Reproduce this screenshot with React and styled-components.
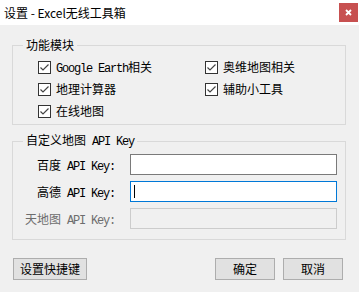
import React from 'react'
import styled, { createGlobalStyle } from 'styled-components'

const GlobalStyle = createGlobalStyle`
  html, body {
    margin: 0;
    padding: 0;
  }
  body {
    background: #f0f0f0;
    font-family: "Noto Sans CJK SC", "Microsoft YaHei", sans-serif;
    font-size: 12px;
    color: #000;
  }
`
const Window = styled.div`
  width: 359px;
  height: 292px;
  background: #f0f0f0;
  display: flex;
  flex-direction: column;
`
const TitleBar = styled.div`
  height: 25px;
  background: #fff;
  display: flex;
  align-items: flex-start;
`
const Title = styled.div`
  padding-left: 4px;
  line-height: 26px;
  font-size: 12px;
`
const CloseButton = styled.div`
  margin: 3px 1px 0 auto;
  width: 19px;
  height: 19px;
  background: #c75050;
  display: flex;
  align-items: center;
  justify-content: center;
`
const Body = styled.div`
  padding: 13px 13px 0 12px;
  display: flex;
  flex-direction: column;
`
const Group = styled.fieldset`
  margin: ${props => props.gap || 0}px 0 0;
  padding: 0;
  min-width: 0;
  border: 1px solid #d9d9d9;
`
const Legend = styled.legend`
  margin-left: 10px;
  padding: 0 3px;
  line-height: 14px;
  font-size: 12px;
`
const Latin = styled.span`
  font-family: "Liberation Mono", monospace;
  font-size: 12px;
  letter-spacing: -1.2px;
`
const CheckGrid = styled.div`
  display: grid;
  grid-template-columns: 167px auto;
  grid-auto-rows: 22px;
  padding: 4px 0 2px 25px;
`
const CheckItem = styled.label`
  display: flex;
  align-items: flex-start;
  gap: 5px;
`
const Box = styled.span`
  margin-top: 5px;
  width: 13px;
  height: 13px;
  box-sizing: border-box;
  border: 1px solid #333;
  background: #fff;
  display: flex;
`
const CheckText = styled.span`
  line-height: 22px;
  white-space: nowrap;
`
const KeyGrid = styled.div`
  display: grid;
  grid-template-columns: 102px 207px;
  grid-auto-rows: 21px;
  column-gap: 15px;
  row-gap: 6px;
  padding: 5px 0 10px;
`
const KeyLabel = styled.span`
  text-align: right;
  line-height: 21px;
  white-space: nowrap;
  color: ${props => (props.disabled ? '#6d6d6d' : '#000')};
`
const TextBox = styled.div`
  box-sizing: border-box;
  height: 21px;
  border: 1px solid ${props => (props.focused ? '#0078d7' : props.disabled ? '#cccccc' : '#7a7a7a')};
  background: ${props => (props.disabled ? '#f0f0f0' : '#fff')};
  display: flex;
  align-items: center;
  padding-left: 3px;
`
const Caret = styled.span`
  width: 1px;
  height: 13px;
  background: #000;
`
const Footer = styled.div`
  margin: 18px 3px 0 1px;
  display: flex;
  gap: 8px;
`
const Button = styled.button`
  width: ${props => props.width || 60}px;
  height: 22px;
  margin-left: ${props => (props.push ? 'auto' : '0')};
  padding: 0;
  border: 1px solid #adadad;
  background: #e1e1e1;
  font-family: "Noto Sans CJK SC", sans-serif;
  font-size: 12px;
  line-height: 20px;
  color: #000;
`

const Check = () => (
  <Box>
    <svg width="11" height="11" viewBox="0 0 11 11">
      <polyline points="1.5,5.5 4,8 9.5,2.5" fill="none" stroke="#444" strokeWidth="1.2" />
    </svg>
  </Box>
)

const modules = [
  [<><Latin>Google Earth</Latin>相关</>],
  ['奥维地图相关'],
  ['地理计算器'],
  ['辅助小工具'],
  ['在线地图'],
]

const keys = [
  { name: '百度' },
  { name: '高德', focused: true },
  { name: '天地图', disabled: true },
]

export default function App() {
  return (
    <Window>
      <GlobalStyle />
      <TitleBar>
        <Title>设置 - Excel无线工具箱</Title>
        <CloseButton>
          <svg width="7" height="7" viewBox="0 0 7 7">
            <path d="M1 1L6 6M6 1L1 6" stroke="#fff" strokeWidth="1.8" />
          </svg>
        </CloseButton>
      </TitleBar>
      <Body>
        <Group>
          <Legend>功能模块</Legend>
          <CheckGrid>
            {modules.map(([text], i) => (
              <CheckItem key={i}>
                <Check />
                <CheckText>{text}</CheckText>
              </CheckItem>
            ))}
          </CheckGrid>
        </Group>
        <Group gap={8}>
          <Legend>
            自定义地图<Latin> API Key</Latin>
          </Legend>
          <KeyGrid>
            {keys.map(k => (
              <React.Fragment key={k.name}>
                <KeyLabel disabled={k.disabled}>
                  {k.name}
                  <Latin> API Key:</Latin>
                </KeyLabel>
                <TextBox focused={k.focused} disabled={k.disabled}>
                  {k.focused && <Caret />}
                </TextBox>
              </React.Fragment>
            ))}
          </KeyGrid>
        </Group>
        <Footer>
          <Button width={74}>设置快捷键</Button>
          <Button push>确定</Button>
          <Button>取消</Button>
        </Footer>
      </Body>
    </Window>
  )
}
